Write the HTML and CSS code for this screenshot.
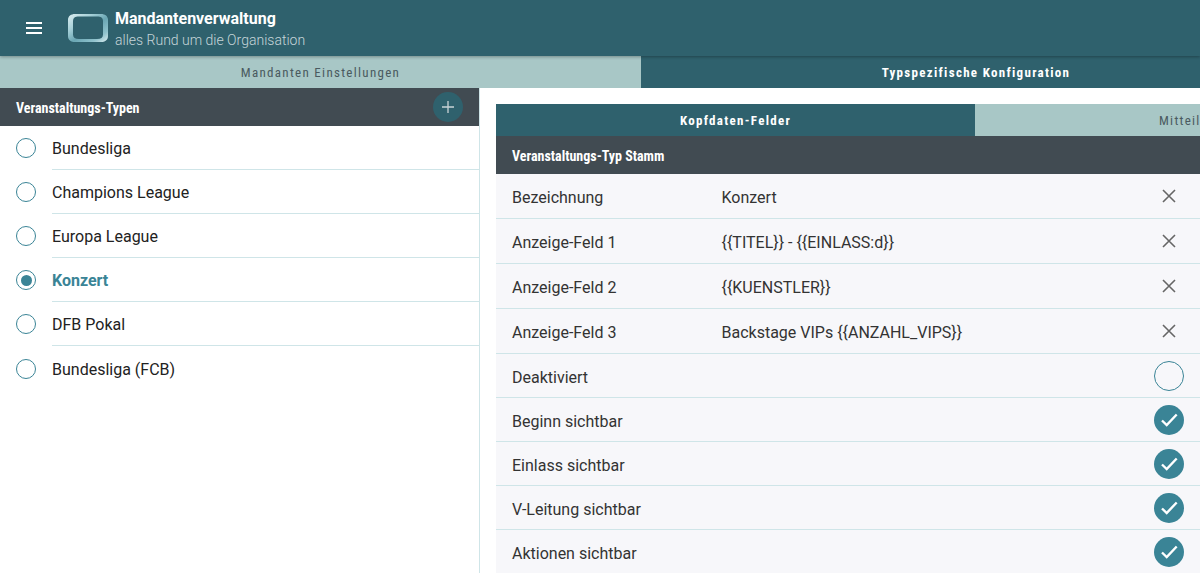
FILE: index.html
```html
<!DOCTYPE html>
<html lang="de">
<head>
<meta charset="utf-8">
<title>Mandantenverwaltung</title>
<link rel="stylesheet" href="styles.css">
</head>
<body>
<header class="topbar">
  <button class="menu" aria-label="Menü">
    <svg width="24" height="24" viewBox="0 0 24 24"><path fill="#fff" d="M4 18h16v-2H4zm0-5h16v-2H4zm0-7v2h16V6z"/></svg>
  </button>
  <svg class="logo" width="42" height="30" viewBox="0 0 42 30">
    <defs>
      <linearGradient id="lg" x1="0" y1="0" x2="1" y2="1">
        <stop offset="0" stop-color="#dcedf0"/><stop offset=".3" stop-color="#a6d0d8"/><stop offset=".55" stop-color="#6aa6b3"/><stop offset=".8" stop-color="#8fc2cc"/><stop offset="1" stop-color="#dcedf0"/>
      </linearGradient>
    </defs>
    <path fill-rule="evenodd" fill="url(#lg)" d="M8 1h26c4 0 7 2 7 6v16c0 4-3 6-7 6H8c-4 0-7-2-7-6V7c0-4 3-6 7-6zm4 2.500c-4 0-6 1-6 5v13c0 3 2 4.500 6 4.500h18c4 0 6-1.500 6-4.500v-13c0-4-2-5-6-5z"/>
  </svg>
  <div class="titles">
    <div class="title">Mandantenverwaltung</div>
    <div class="subtitle">alles Rund um die Organisation</div>
  </div>
</header>
<nav class="maintabs">
  <div class="tab off">Mandanten Einstellungen</div>
  <div class="tab on">Typspezifische Konfiguration</div>
</nav>
<main class="content">
  <aside class="left">
    <div class="sectionhead lefthead">
      <span class="headtext">Veranstaltungs-Typen</span>
      <button class="add" aria-label="Hinzufügen"><svg width="16" height="16" viewBox="0 0 16 16"><path d="M8 2v12M2 8h12" stroke="#c9d3d6" stroke-width="1.3" fill="none"/></svg></button>
    </div>
    <ul class="types">
      <li class="type"><i class="radio"></i><span class="typename">Bundesliga</span></li>
      <li class="type"><i class="radio"></i><span class="typename">Champions League</span></li>
      <li class="type"><i class="radio"></i><span class="typename">Europa League</span></li>
      <li class="type selected"><i class="radio"></i><span class="typename">Konzert</span></li>
      <li class="type"><i class="radio"></i><span class="typename">DFB Pokal</span></li>
      <li class="type last"><i class="radio"></i><span class="typename">Bundesliga (FCB)</span></li>
    </ul>
  </aside>
  <section class="right">
    <div class="subtabs">
      <div class="subtab on">Kopfdaten-Felder</div>
      <div class="subtab off"><span class="clip">Mitteil</span></div>
    </div>
    <div class="sectionhead righthead"><span class="headtext">Veranstaltungs-Typ Stamm</span></div>
    <div class="rows">
      <div class="row input"><span class="label">Bezeichnung</span><span class="value">Konzert</span><svg class="x" width="14" height="14" viewBox="0 0 14 14"><path d="M1 1l12 12M13 1L1 13" stroke="#666" stroke-width="1.6"/></svg></div>
      <div class="row input"><span class="label">Anzeige-Feld 1</span><span class="value">{{TITEL}} - {{EINLASS:d}}</span><svg class="x" width="14" height="14" viewBox="0 0 14 14"><path d="M1 1l12 12M13 1L1 13" stroke="#666" stroke-width="1.6"/></svg></div>
      <div class="row input"><span class="label">Anzeige-Feld 2</span><span class="value">{{KUENSTLER}}</span><svg class="x" width="14" height="14" viewBox="0 0 14 14"><path d="M1 1l12 12M13 1L1 13" stroke="#666" stroke-width="1.6"/></svg></div>
      <div class="row input"><span class="label">Anzeige-Feld 3</span><span class="value">Backstage VIPs {{ANZAHL_VIPS}}</span><svg class="x" width="14" height="14" viewBox="0 0 14 14"><path d="M1 1l12 12M13 1L1 13" stroke="#666" stroke-width="1.6"/></svg></div>
      <div class="row flag"><span class="label">Deaktiviert</span><i class="check"></i></div>
      <div class="row flag"><span class="label">Beginn sichtbar</span><i class="check done"><svg width="30" height="30" viewBox="0 0 30 30"><path d="M8 15.500l4.700 4.500 10-10.500" stroke="#fff" stroke-width="2.4" fill="none"/></svg></i></div>
      <div class="row flag"><span class="label">Einlass sichtbar</span><i class="check done"><svg width="30" height="30" viewBox="0 0 30 30"><path d="M8 15.500l4.700 4.500 10-10.500" stroke="#fff" stroke-width="2.4" fill="none"/></svg></i></div>
      <div class="row flag"><span class="label">V-Leitung sichtbar</span><i class="check done"><svg width="30" height="30" viewBox="0 0 30 30"><path d="M8 15.500l4.700 4.500 10-10.500" stroke="#fff" stroke-width="2.4" fill="none"/></svg></i></div>
      <div class="row flag"><span class="label">Aktionen sichtbar</span><i class="check done"><svg width="30" height="30" viewBox="0 0 30 30"><path d="M8 15.500l4.700 4.500 10-10.500" stroke="#fff" stroke-width="2.4" fill="none"/></svg></i></div>
    </div>
  </section>
</main>
</body>
</html>
```
FILE: styles.css
```css
* { box-sizing: border-box; }
html, body { margin: 0; height: 100%; overflow: hidden; }
body { font-family: Roboto, "Liberation Sans", sans-serif; background: #fff; color: #222; width: 1200px; height: 573px; }
.topbar { height: 56px; background: #2f616d; display: flex; align-items: center; color: #fff; position: relative; z-index: 2; box-shadow: 0 1px 3px rgba(0,0,0,.3); }
.menu { width: 24px; height: 24px; margin-left: 22px; padding: 0; background: none; border: 0; display: flex; }
.logo { margin-left: 21px; }
.titles { margin-left: 6px; margin-top: 3px; }
.title { font-size: 16px; font-weight: 700; line-height: 20px; margin-bottom: 1px; }
.subtitle { font-size: 14px; line-height: 20px; color: #c5d5d9; font-weight: 300; }
.maintabs { display: flex; height: 32px; }
.tab { display: flex; align-items: center; justify-content: center; font-size: 13px; letter-spacing: 1.3px; font-stretch: 75%; }
.tab.off { width: 641px; background: #a8c7c6; color: #4a5a60; }
.tab.on { width: 559px; padding-left: 111px; background: #2f616d; color: #fff; font-weight: 700; }
.content { display: flex; height: 485px; }
.left { width: 480px; border-right: 1px solid #cfe5e8; flex: none; }
.sectionhead { background: #414b52; color: #fff; height: 38px; display: flex; align-items: center; font-size: 14px; font-weight: 700; font-stretch: 75%; }
.headtext { padding-top: 2px; }
.lefthead { justify-content: space-between; padding: 0 16px; }
.add { width: 30px; height: 30px; border-radius: 50%; background: #2f616d; border: 0; padding: 0; display: flex; align-items: center; justify-content: center; }
.types { list-style: none; margin: 0; padding: 0; }
.type { height: 44px; display: flex; align-items: center; font-size: 16px; position: relative; }
.type::after { content: ""; position: absolute; left: 52px; right: 0; bottom: 0; height: 1px; background: #cfe5e8; }
.type.last { padding-top: 2px; }
.type.last::after { display: none; }
.radio { width: 20px; height: 20px; border: 1.4px solid #3a8496; border-radius: 50%; margin: 0 16px; display: flex; align-items: center; justify-content: center; flex: none; }
.selected .radio::before { content: ""; width: 11px; height: 11px; border-radius: 50%; background: #3a8496; }
.selected .typename { color: #3a8496; font-weight: 700; }
.typename { color: #222; }
.right { flex: none; width: 720px; padding: 16px 0 0 16px; overflow: hidden; }
.subtabs { display: flex; height: 32px; width: 958px; }
.subtab { width: 479px; display: flex; align-items: center; justify-content: center; font-size: 13px; letter-spacing: 1.3px; font-stretch: 75%; }
.subtab.on { background: #2f616d; color: #fff; font-weight: 700; }
.subtab.off { background: #a8c7c6; color: #4a5a60; justify-content: flex-start; padding-left: 184px; }
.righthead { padding: 0 16px; }
.rows { background: #f7f7fa; }
.row { height: 44px; display: flex; align-items: center; padding: 0 16px; font-size: 16px; color: #333; border-bottom: 1px solid #cfe5e8; }
.row.input { height: 45px; padding-top: 2px; }
.row.flag { padding-top: 1px; }
.row.flag .label { margin-top: 2px; }
.label { width: 209.5px; flex: none; }
.value { flex: 1; }
.x { margin-right: 8px; margin-top: -2px; flex: none; }
.check { margin-left: auto; width: 30px; height: 30px; border: 1.4px solid #3a8496; border-radius: 50%; flex: none; display: block; }
.check.done { background: #3a8496; border: 0; }
.check svg { display: block; }
```
